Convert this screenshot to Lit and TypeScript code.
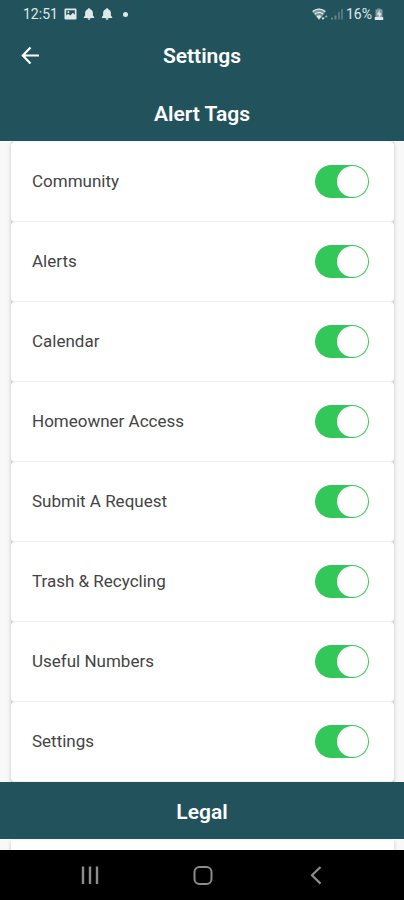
import { LitElement, html, css } from "lit";
import { customElement, state, property } from "lit/decorators.js";

@customElement("status-bar")
class StatusBar extends LitElement {
  static styles = css`
    :host {
      display: flex;
      justify-content: space-between;
      align-items: center;
      height: 28px;
      padding: 0 20px 0 23px;
      color: #dfe9ea;
      font-size: 14px;
      line-height: 16px;
    }
    .group {
      display: flex;
      align-items: center;
    }
    .left {
      gap: 6px;
    }
    .right {
      gap: 2px;
    }
    svg {
      display: block;
      fill: currentColor;
    }
    .dot {
      width: 5px;
      height: 5px;
      margin-left: 4px;
      border-radius: 50%;
      background: currentColor;
    }
  `;

  private bell() {
    return html`<svg width="12" height="12" viewBox="0 0 12 12" aria-hidden="true">
      <path d="M6 0.200c.7 0 1.100.4 1.100 1C9 1.800 9.900 3.200 9.900 5v2.500l1.300 1.700v.7H.8v-.7L2.100 7.500V5c0-1.800.9-3.200 2.800-3.800C4.900.6 5.300.2 6 .2z" />
      <path d="M4.500 10.300h3c0 .9-.6 1.500-1.500 1.500s-1.500-.6-1.500-1.500z" />
    </svg>`;
  }

  render() {
    return html`
      <div class="group left">
        <span>12:51</span>
        <svg width="13" height="12" viewBox="0 0 13 12" aria-hidden="true">
          <path
            fill-rule="evenodd"
            d="M1.500 .5h10a1 1 0 0 1 1 1v9a1 1 0 0 1-1 1h-10a1 1 0 0 1-1-1v-9a1 1 0 0 1 1-1zM2.200 2.200v5.300l2-1.700 2.200 1.700 2.500-2.700 1.900 1.900V2.200z"
          />
          <circle cx="4.400" cy="4" r="1" />
        </svg>
        ${this.bell()} ${this.bell()}
        <span class="dot"></span>
      </div>
      <div class="group right">
        <svg width="16" height="13" viewBox="0 0 16 13" aria-hidden="true">
          <path opacity=".45" d="M0 3.400C4-.4 10-.4 14 3.400L7 12z" />
          <path fill="none" stroke="currentColor" stroke-width="1.300" d="M.8 3.600C4.500.3 9.500.3 13.200 3.600M3 6c2.500-2 5.500-2 8 0" />
          <path d="M4.600 8.200c1.500-1.200 3.300-1.200 4.800 0L7 11.500z" />
          <path d="M9.300 9.600h3.400L11 12z" />
          <path opacity=".6" d="M12.600 9.200L14.200 7l1.600 2.200z" />
        </svg>
        <svg width="14" height="12" viewBox="0 0 14 12" aria-hidden="true">
          <path d="M1 9.500h2v2H1zM4.500 7.500h2v4h-2z" opacity=".35" />
          <path d="M8 4h2v7.500H8zM11 1h2v10.500h-2z" opacity=".25" />
        </svg>
        <span>16%</span>
        <svg width="10" height="13" viewBox="0 0 10 13" aria-hidden="true">
          <path opacity=".5" d="M3.500 .5h3v1H8.500v8h-7v-8h2z" />
          <path d="M5.800 2L2.800 6.500h1.900V9h1L7.500 5.200H5.500z" />
          <path d="M.8 9h8.400v3H.8z" />
        </svg>
      </div>
    `;
  }
}

@customElement("tag-row")
class TagRow extends LitElement {
  @property() label = "";
  @property({ type: Boolean }) on = false;

  static styles = css`
    :host {
      display: block;
    }
    .row {
      display: flex;
      align-items: center;
      justify-content: space-between;
      height: 80px;
      padding: 0 25px 0 21px;
      box-sizing: border-box;
      border-bottom: 1px solid #f0f0f0;
      border-radius: 4px;
      background: #fff;
      cursor: pointer;
    }
    .text {
      color: #444;
      font-size: 17px;
      line-height: 21px;
    }
    .switch {
      appearance: none;
      display: flex;
      align-items: center;
      box-sizing: border-box;
      width: 54px;
      height: 33px;
      margin: 0;
      padding: 1px;
      border-radius: 17px;
      background: #d8d8dc;
      cursor: pointer;
    }
    .switch::before {
      content: "";
      width: 31px;
      height: 31px;
      border-radius: 50%;
      background: #fff;
    }
    .switch:checked {
      justify-content: flex-end;
      background: #33c759;
    }
  `;

  render() {
    return html`
      <label class="row">
        <span class="text">${this.label}</span>
        <input
          class="switch"
          type="checkbox"
          role="switch"
          .checked=${this.on}
          @change=${(e: Event) => (this.on = (e.target as HTMLInputElement).checked)}
        />
      </label>
    `;
  }
}

@customElement("app-root")
class AppRoot extends LitElement {
  @state() private tags = [
    "Community",
    "Alerts",
    "Calendar",
    "Homeowner Access",
    "Submit A Request",
    "Trash & Recycling",
    "Useful Numbers",
    "Settings",
  ];

  static styles = css`
    :host {
      display: flex;
      flex-direction: column;
      height: 100vh;
      background: #f8f8f8;
      font-family: Roboto, "Liberation Sans", sans-serif;
    }
    .top {
      flex: none;
      background: #22535c;
    }
    .bar {
      display: grid;
      grid-template-columns: 60px 1fr 60px;
      align-items: center;
      height: 56px;
    }
    .title,
    .section {
      margin: 0;
      color: #fff;
      font-size: 21px;
      font-weight: 600;
      line-height: 28px;
      text-align: center;
    }
    .section {
      padding: 16px 0 13px;
      background: #22535c;
    }
    .back {
      display: flex;
      align-items: center;
      justify-content: center;
      height: 48px;
      padding: 0;
      border: 0;
      background: none;
      color: #fff;
      cursor: pointer;
    }
    svg {
      display: block;
      fill: none;
      stroke: currentColor;
    }
    .content {
      flex: 1;
      min-height: 0;
      overflow-y: auto;
      scrollbar-width: none;
    }
    .cards {
      margin: 1px 10px 0 11px;
      background: #d4d4d4;
      box-shadow: 0 2px 4px rgba(0, 0, 0, 0.2);
    }
    .legal {
      min-height: 80px;
      background: #fff;
    }
    .legal-heading {
      position: relative;
    }
    .nav {
      display: grid;
      grid-template-columns: repeat(3, 113px);
      justify-content: center;
      box-sizing: border-box;
      flex: none;
      height: 50px;
      padding-left: 2px;
      background: #000;
    }
    .key {
      display: flex;
      align-items: center;
      justify-content: center;
      padding: 0;
      border: 0;
      background: none;
      color: #8c8c8c;
      cursor: pointer;
    }
  `;

  render() {
    return html`
      <header class="top">
        <status-bar></status-bar>
        <div class="bar">
          <button class="back" aria-label="Back">
            <svg width="20" height="20" viewBox="0 0 20 20" stroke-width="2.200">
              <path d="M19 9.500H3M10.500 1.500L2.800 9.500l7.700 8" />
            </svg>
          </button>
          <h1 class="title">Settings</h1>
        </div>
        <h2 class="section">Alert Tags</h2>
      </header>
      <main class="content">
        <div class="cards">
          ${this.tags.map((tag) => html`<tag-row .label=${tag} .on=${true}></tag-row>`)}
        </div>
        <h2 class="section legal-heading">Legal</h2>
        <div class="cards">
          <div class="legal"></div>
        </div>
      </main>
      <nav class="nav">
        <button class="key" aria-label="Recent apps">
          <svg width="20" height="20" viewBox="0 0 20 20" stroke-width="2.400">
            <path d="M3 1.500v17.500M10 1.500v17.500M17 1.500v17.500" />
          </svg>
        </button>
        <button class="key" aria-label="Home">
          <svg width="20" height="20" viewBox="0 0 20 20" stroke-width="2">
            <rect x="1.500" y="2" width="17" height="17" rx="5" />
          </svg>
        </button>
        <button class="key" aria-label="Go back">
          <svg width="20" height="20" viewBox="0 0 20 20" stroke-width="2.200">
            <path d="M14.500 2L6 10.300l8.500 8.300" />
          </svg>
        </button>
      </nav>
    `;
  }
}
